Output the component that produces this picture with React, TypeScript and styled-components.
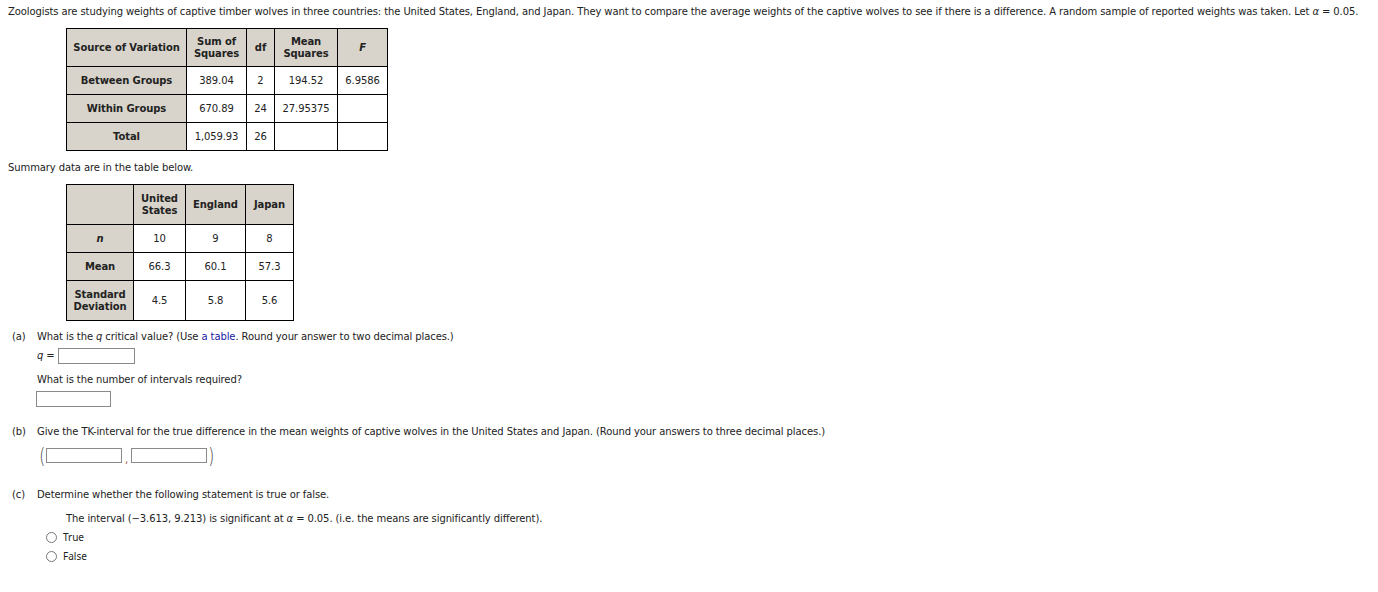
import React from 'react'
import styled, { createGlobalStyle } from 'styled-components';

const colors = {
  text: '#222222',
  head: '#d8d4cb',
  border: '#000000',
  link: '#1a1aa6',
  inputBorder: '#8a8a8a'
};

const GlobalStyle = createGlobalStyle`
  html, body {
    margin: 0;
    padding: 0;
    background: #ffffff;
  }
  body {
    font-family: "DejaVu Sans", Verdana, sans-serif;
    font-size: 10px;
    letter-spacing: -0.1px;
    color: ${ colors.text };
  }
`;

const Page = styled.div`
  padding: 5px 8px 20px 8px;
  line-height: 14px;
`;

const Line = styled.div<{ $top?: number, $indent?: number }>`
  margin-top: ${ p => p.$top || 0 }px;
  margin-left: ${ p => p.$indent || 0 }px;
  white-space: nowrap;
`;

const Table = styled.table<{ $top: number }>`
  border-collapse: collapse;
  margin: ${ p => p.$top }px 0 0 58px;
  table-layout: fixed;
`;

const Cell = styled.td<{ $w?: number, $h?: number, $head?: boolean }>`
  border: 1px solid ${ colors.border };
  background: ${ p => p.$head ? colors.head : '#ffffff' };
  font-weight: ${ p => p.$head ? 700 : 400 };
  width: ${ p => p.$w ? p.$w + 'px' : 'auto' };
  height: ${ p => p.$h ? p.$h + 'px' : 'auto' };
  text-align: center;
  vertical-align: middle;
  padding: 0 3px;
  box-sizing: border-box;
  line-height: 12px;
`;

const Var = styled.i`
  font-family: "DejaVu Sans", sans-serif;
  font-style: italic;
`;

const Part = styled.div<{ $top: number }>`
  display: flex;
  margin-top: ${ p => p.$top }px;
  padding-left: 4px;
`;

const PartLabel = styled.div`
  width: 25px;
  flex: none;
  line-height: 14px;
`;

const PartBody = styled.div`
  display: flex;
  flex-direction: column;
`;

const Link = styled.span`
  color: ${ colors.link };
`;

const Box = styled.span<{ $w: number, $h?: number }>`
  display: inline-block;
  width: ${ p => p.$w }px;
  height: ${ p => p.$h || 16 }px;
  border: 1px solid ${ colors.inputBorder };
  box-sizing: border-box;
  background: #fff;
  vertical-align: middle;
`;

const Row = styled.div<{ $top: number, $indent?: number, $gap?: number }>`
  display: flex;
  align-items: center;
  margin-top: ${ p => p.$top }px;
  margin-left: ${ p => p.$indent || 0 }px;
  gap: ${ p => p.$gap ?? 4 }px;
`;

const Paren = styled.span`
  display: inline-block;
  width: 8px;
  text-align: center;
  font-family: "DejaVu Sans", sans-serif;
  font-size: 22px;
  font-weight: 200;
  line-height: 21px;
  color: #444;
  transform: scaleX(0.7);
`;

const Comma = styled.span`
  color: #b04010;
  align-self: flex-end;
  line-height: 12px;
  margin: 0 3px;
`;

const Radio = styled.label<{ $top: number }>`
  display: flex;
  align-items: center;
  gap: 6px;
  margin-top: ${ p => p.$top }px;
  margin-left: 9px;
  font-family: "Noto Sans", "Open Sans", sans-serif;
  font-size: 10px;
  letter-spacing: 0;
  line-height: 14px;
`;

const Dot = styled.span`
  width: 11px;
  height: 11px;
  border-radius: 50%;
  border: 1px solid #777;
  box-sizing: border-box;
  flex: none;
`;

const anova = [
  ['Between Groups', '389.04', '2', '194.52', '6.9586'],
  ['Within Groups', '670.89', '24', '27.95375', ''],
  ['Total', '1,059.93', '26', '', '']
];

const anovaWidths = [120, 60, 28, 63, 50];

export default function App() {
  return <>
    <GlobalStyle />
    <Page>
      <Line>
        Zoologists are studying weights of captive timber wolves in three countries: the United States, England, and Japan. They want to compare the average weights of the captive wolves to see if there is a difference. A random sample of reported weights was taken. Let <Var>α</Var> = 0.05.
      </Line>

      <Table $top={ 9 }>
        <tbody>
          <tr>
            <Cell $head $w={ 120 } $h={ 38 }>Source of Variation</Cell>
            <Cell $head $w={ 60 }>Sum of Squares</Cell>
            <Cell $head $w={ 28 }>df</Cell>
            <Cell $head $w={ 63 }>Mean Squares</Cell>
            <Cell $head $w={ 50 }><i>F</i></Cell>
          </tr>
          { anova.map(row => (
            <tr key={ row[0] }>
              { row.map((v, i) => (
                <Cell key={ i } $head={ i === 0 } $w={ anovaWidths[i] } $h={ 28 }>{ v }</Cell>
              )) }
            </tr>
          )) }
        </tbody>
      </Table>

      <Line $top={ 10 }>Summary data are in the table below.</Line>

      <Table $top={ 9 }>
        <tbody>
          <tr>
            <Cell $head $w={ 67 } $h={ 40 }></Cell>
            <Cell $head $w={ 52 }>United States</Cell>
            <Cell $head $w={ 60 }>England</Cell>
            <Cell $head $w={ 48 }>Japan</Cell>
          </tr>
          <tr>
            <Cell $head $h={ 28 }><i>n</i></Cell>
            <Cell>10</Cell>
            <Cell>9</Cell>
            <Cell>8</Cell>
          </tr>
          <tr>
            <Cell $head $h={ 28 }>Mean</Cell>
            <Cell>66.3</Cell>
            <Cell>60.1</Cell>
            <Cell>57.3</Cell>
          </tr>
          <tr>
            <Cell $head $h={ 40 }>Standard Deviation</Cell>
            <Cell>4.5</Cell>
            <Cell>5.8</Cell>
            <Cell>5.6</Cell>
          </tr>
        </tbody>
      </Table>

      <Part $top={ 9 }>
        <PartLabel>(a)</PartLabel>
        <PartBody>
          <Line>What is the <Var>q</Var> critical value? (Use <Link>a table</Link>. Round your answer to two decimal places.)</Line>
          <Row $top={ 4 } $gap={ 3 }>
            <span><Var>q</Var> =</span>
            <Box $w={ 77 } />
          </Row>
          <Line $top={ 9 }>What is the number of intervals required?</Line>
          <Row $top={ 4 } $indent={ -1 }>
            <Box $w={ 75 } />
          </Row>
        </PartBody>
      </Part>

      <Part $top={ 18 }>
        <PartLabel>(b)</PartLabel>
        <PartBody>
          <Line>Give the TK-interval for the true difference in the mean weights of captive wolves in the United States and Japan. (Round your answers to three decimal places.)</Line>
          <Row $top={ 6 } $indent={ 1 } $gap={ 0 }>
            <Paren>(</Paren>
            <Box $w={ 76 } $h={ 15 } />
            <Comma>,</Comma>
            <Box $w={ 76 } $h={ 15 } />
            <Paren>)</Paren>
          </Row>
        </PartBody>
      </Part>

      <Part $top={ 22 }>
        <PartLabel>(c)</PartLabel>
        <PartBody>
          <Line>Determine whether the following statement is true or false.</Line>
          <Line $top={ 10 } $indent={ 29 }>
            The interval (−3.613, 9.213) is significant at <Var>α</Var> = 0.05. (i.e. the means are significantly different).
          </Line>
          <Radio $top={ 4 }><Dot />True</Radio>
          <Radio $top={ 5 }><Dot />False</Radio>
        </PartBody>
      </Part>
    </Page>
  </>
}
